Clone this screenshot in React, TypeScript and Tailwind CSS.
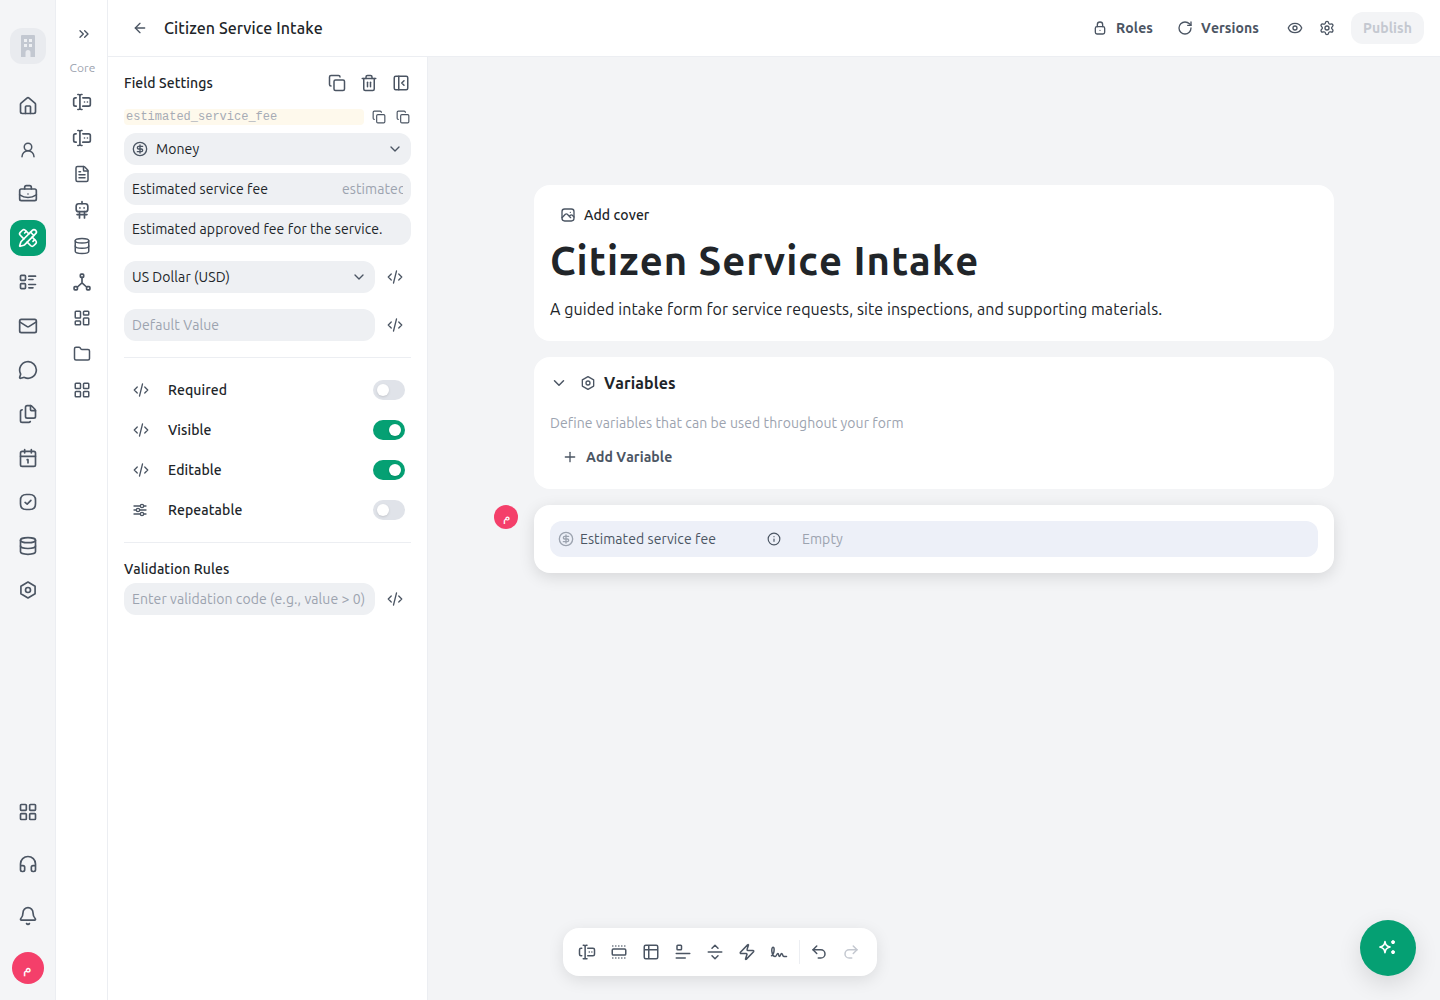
import React from "react";
import {
  House, UserRound, BriefcaseBusiness, PencilRuler, Mail, MessageCircle, Files, Calendar1, Database,
  LayoutGrid, Headphones, Bell, ChevronsRight, FileText, LayoutDashboard,
  Folder, ArrowLeft, RotateCw, Eye, Settings, Copy, Trash2, PanelLeftClose, ChevronDown, CircleDollarSign,
  Plus, Info, Table2, Zap, Undo2, Redo2
} from "lucide-react";

const ic = "#4b5563";

function S({ size = 20, children, color = ic, w = 2 }: { size?: number; children: React.ReactNode; color?: string; w?: number }) {
  return (
    <svg width={size} height={size} viewBox="0 0 24 24" fill="none" stroke={color} strokeWidth={w} strokeLinecap="round" strokeLinejoin="round">
      {children}
    </svg>
  );
}
function HexIcon({ size = 18 }: { size?: number }) {
  return <S size={size}><path d="M12 2.500l8.500 4.900v9.200L12 21.500l-8.500-4.900V7.400z" /><circle cx="12" cy="12" r="3" /></S>;
}
function CheckSq() {
  return <S><path d="M10 3h4c5 0 7 2 7 7v4c0 5-2 7-7 7h-4c-5 0-7-2-7-7v-4c0-5 2-7 7-7z" /><path d="M8.500 12.500l2.500 2 4.500-4.500" /></S>;
}
function ListIcon() {
  return <S><rect x="3" y="4" width="6" height="6" rx="1" /><rect x="3" y="14" width="6" height="6" rx="1" /><path d="M13 5h8M13 9h5M13 15h8M13 19h5" /></S>;
}
function LockDot() {
  return <S size={16}><rect x="5" y="10" width="14" height="11" rx="2.500" /><path d="M8 10V7a4 4 0 0 1 8 0v3M12 15.500h.01" /></S>;
}
function Field2({ size = 20 }: { size?: number }) {
  return (
    <S size={size}>
      <path d="M9.500 3.500v17M7 3h1a1.500 1.500 0 0 1 1.500 1.500A1.500 1.500 0 0 1 11 3h1M7 21h1a1.500 1.500 0 0 0 1.500-1.500A1.500 1.500 0 0 0 11 21h1" />
      <path d="M13 7h7a2 2 0 0 1 2 2v6a2 2 0 0 1-2 2h-7" />
      <path d="M5 7H4a2 2 0 0 0-2 2v6a2 2 0 0 0 2 2h1" />
      <path d="M15 12h.01M18.500 12h.01" />
    </S>
  );
}
function Signature() {
  return <S size={18}><path d="M2 17c2 0 3.500-5 3.500-8.500C5.500 6.500 5 5.500 4 5.500S2 8 2.500 11.500 5 18 7 18c1.500 0 2-4 3.500-4s.5 4 2 4 1.500-4 3-4 1 4 3 4h3.500" /></S>;
}
function Code({ size = 18 }: { size?: number }) {
  return <S size={size} w={1.75}><path d="M7 8l-4 4 4 4M17 8l4 4-4 4M14 4l-4 16" /></S>;
}
function Sliders() {
  return <S size={16}><path d="M3 6h9M18 6h3M3 12h3M12 12h9M3 18h9M18 18h3" /><circle cx="15" cy="6" r="2.500" /><circle cx="9" cy="12" r="2.500" /><circle cx="15" cy="18" r="2.500" /></S>;
}
function Robot() {
  return (
    <S size={20}>
      <rect x="5" y="4.500" width="14" height="9.500" rx="3" />
      <path d="M12 2v2.500M9.500 9.500h.01M14.500 9.500h.01M9 14v7.500M15 14v7.500M6 17.500h12" />
    </S>
  );
}
function Hub() {
  return (
    <S size={20}>
      <rect x="10" y="2.500" width="4" height="4" rx="1" />
      <rect x="2.500" y="17.500" width="4" height="4" rx="1" />
      <rect x="17.500" y="17.500" width="4" height="4" rx="1" />
      <path d="M12 6.500V13M12 13l-5.500 5M12 13l5.500 5" />
    </S>
  );
}
function Cover() {
  return (
    <S size={16}>
      <rect x="3" y="3" width="18" height="18" rx="4" />
      <path d="M3 16l5-5c1-1 2-1 3 0l5 5M14 14l1.500-1.500c1-1 2-1 3 0L21 15M15.500 8h.01" />
    </S>
  );
}
function Logo() {
  return (
    <svg width="20" height="24" viewBox="0 0 20 24">
      <path fill="#c3c8d1" d="M3 2a1 1 0 0 1 1-1h12a1 1 0 0 1 1 1v21h-4.500v-4.500a2.500 2.500 0 0 0-5 0V23H3z" />
      <g fill="#eef0f3">
        <rect x="6" y="5" width="3" height="3" />
        <rect x="11" y="5" width="3" height="3" />
        <rect x="6" y="10" width="3" height="3" />
        <rect x="11" y="10" width="3" height="3" />
      </g>
    </svg>
  );
}
function Spark() {
  return (
    <svg width="22" height="22" viewBox="0 0 24 24" fill="none" stroke="#fff" strokeWidth="1.800" strokeLinejoin="round">
      <path d="M8.700 5c.6 3.600 1.500 4.800 5.500 6-4 1.200-4.900 2.400-5.500 6-.6-3.600-1.500-4.800-5.500-6 4-1.200 4.900-2.400 5.500-6z" />
      <path d="M17.500 3.500v4M15.500 5.500h4M17.500 14.500v4M15.500 16.500h4" strokeWidth="2.400" />
    </svg>
  );
}
function Avatar({ size, text }: { size: string; text: string }) {
  return (
    <div className={`${size} rounded-full bg-[#f43f6a] flex items-center justify-center text-white leading-none ${text}`}>م</div>
  );
}
function Toggle({ on }: { on?: boolean }) {
  return (
    <div className={`w-8 h-5 rounded-full flex items-center px-[4px] ${on ? "bg-[#05a073] justify-end" : "bg-[#e0e3e9] justify-start"}`}>
      <div className="w-3 h-3 rounded-full bg-white shadow-sm" />
    </div>
  );
}
function Sep() {
  return <div className="h-px bg-[#eceef2]" />;
}

const top = [
  <House size={20} />, <UserRound size={18} />, <BriefcaseBusiness size={20} />, <PencilRuler size={20} color="#fff" />,
  <ListIcon />, <Mail size={20} />, <MessageCircle size={20} />, <Files size={20} />, <Calendar1 size={20} />,
  <CheckSq />, <Database size={20} />, <HexIcon size={20} />,
];
const core = [
  <Field2 />, <Field2 />, <FileText size={18} />, <Robot />, <Database size={18} />, <Hub />,
  <LayoutDashboard size={18} />, <Folder size={18} />, <LayoutGrid size={18} />,
];

function Toggles() {
  const rows: [React.ReactNode, string, boolean][] = [
    [<Code />, "Required", false],
    [<Code />, "Visible", true],
    [<Code />, "Editable", true],
    [<Sliders />, "Repeatable", false],
  ];
  return (
    <div className="py-3 flex flex-col">
      {rows.map(([i, l, on]) => (
        <div key={l} className="h-10 flex items-center pl-2 pr-[6px]">
          <span className="w-9 flex">{i}</span>
          <span className="flex-1 text-sm font-medium text-[#212529]">{l}</span>
          <Toggle on={on} />
        </div>
      ))}
    </div>
  );
}

export default function App() {
  return (
    <div className="w-[1440px] h-[1000px] flex overflow-hidden bg-[#f3f4f6] text-[#212529] relative font-['Ubuntu','Noto_Sans',sans-serif] [font-kerning:none] tracking-[0.085px]">
      <aside className="w-14 shrink-0 flex flex-col items-center border-r border-[#eceef2] bg-[#f4f5f7] text-[#4b5563] pt-7 pb-4">
        <div className="w-9 h-9 rounded-xl bg-[#e9ebef] flex items-center justify-center mb-6">
          <Logo />
        </div>
        {top.map((t, i) => (
          <div key={i} className={`w-9 h-9 mb-2 flex items-center justify-center rounded-xl ${i === 3 ? "bg-[#05a073]" : ""}`}>{t}</div>
        ))}
        <div className="flex-1" />
        <div className="flex flex-col items-center gap-5">
          <div className="h-8 flex items-center"><LayoutGrid size={20} /></div>
          <div className="h-8 flex items-center"><Headphones size={20} /></div>
          <div className="h-8 flex items-center"><Bell size={20} /></div>
          <Avatar size="w-8 h-8" text="text-sm" />
        </div>
      </aside>
      <nav className="w-[52px] shrink-0 bg-white border-r border-[#eceef2] flex flex-col items-center text-[#4b5563]">
        <div className="h-9 mt-4 flex items-center ml-1"><ChevronsRight size={16} /></div>
        <div className="text-xs text-[#9ca3af] mt-2 mb-2 ml-[2px]">Core</div>
        {core.map((c, i) => (
          <div key={i} className="w-9 h-9 flex items-center justify-center">{c}</div>
        ))}
      </nav>
      <div className="flex-1 flex flex-col min-w-0">
        <header className="h-[57px] shrink-0 bg-white border-b border-[#eceef2] flex items-center pl-6 pr-4">
          <ArrowLeft size={16} className="text-[#4b5563]" />
          <h1 className="text-base font-medium text-[#212529] ml-4">Citizen Service Intake</h1>
          <div className="flex-1" />
          <LockDot />
          <span className="text-sm font-semibold text-[#4b5563] ml-2">Roles</span>
          <RotateCw size={16} className="text-[#4b5563] ml-6" />
          <span className="text-sm font-semibold text-[#4b5563] ml-2">Versions</span>
          <Eye size={16} className="text-[#4b5563] ml-7" />
          <Settings size={16} className="text-[#4b5563] ml-4" />
          <div className="ml-4 h-8 px-3 rounded-xl bg-[#f3f4f6] text-sm font-semibold text-[#c4c8d0] flex items-center">Publish</div>
        </header>
        <div className="flex-1 flex min-h-0">
          <section className="w-[320px] shrink-0 bg-white border-r border-[#eceef2] px-4 pt-4">
            <div className="flex items-center h-5">
              <span className="flex-1 text-sm font-medium text-[#212529]">Field Settings</span>
              <Copy size={18} className="text-[#4b5563]" />
              <Trash2 size={18} className="text-[#4b5563] ml-[14px]" />
              <PanelLeftClose size={18} className="text-[#4b5563] ml-[14px] mr-px" />
            </div>
            <div className="flex items-center mt-4 h-4 mb-2">
              <div className="w-[240px] h-4 bg-[#fef9ec] rounded text-xs text-[#a6abb5] px-[2px] leading-4 tracking-normal font-['Liberation_Mono',monospace]">estimated_service_fee</div>
              <Copy size={14} className="text-[#4b5563] ml-[8px]" />
              <Copy size={14} className="text-[#4b5563] ml-[10px]" />
            </div>
            <div className="h-8 rounded-xl bg-[#eef0f3] flex items-center px-2 text-sm">
              <CircleDollarSign size={16} className="text-[#4b5563]" />
              <span className="ml-2 flex-1">Money</span>
              <ChevronDown size={16} className="text-[#4b5563]" />
            </div>
            <div className="h-8 rounded-xl bg-[#eef0f3] flex items-center px-2 text-sm mt-2">
              <span className="flex-1">Estimated service fee</span>
              <span className="w-[61px] overflow-hidden text-[#9ca3af] whitespace-nowrap">estimated_service_fee</span>
            </div>
            <div className="h-8 rounded-xl bg-[#eef0f3] flex items-center px-2 text-sm mt-2">Estimated approved fee for the service.</div>
            <div className="flex items-center mt-4">
              <div className="w-[251px] h-8 rounded-xl bg-[#eef0f3] flex items-center px-2 text-sm">
                <span className="flex-1">US Dollar (USD)</span>
                <ChevronDown size={16} className="text-[#4b5563]" />
              </div>
              <span className="ml-[11px] flex"><Code /></span>
            </div>
            <div className="flex items-center mt-4">
              <div className="w-[251px] h-8 rounded-xl bg-[#eef0f3] flex items-center px-2 text-sm text-[#9ca3af]">Default Value</div>
              <span className="ml-[11px] flex"><Code /></span>
            </div>
            <div className="mt-4"><Sep /></div>
            <Toggles />
            <Sep />
            <div className="text-sm font-medium text-[#212529] mt-4 mb-1 h-5 leading-5">Validation Rules</div>
            <div className="flex items-center">
              <div className="w-[251px] h-8 rounded-xl bg-[#eef0f3] flex items-center px-2 text-sm text-[#9ca3af] whitespace-nowrap">Enter validation code (e.g., value &gt; 0)</div>
              <span className="ml-[11px] flex"><Code /></span>
            </div>
          </section>
          <main className="flex-1 flex flex-col items-center pt-[128px] gap-4">
            <div className="w-[800px] h-[156px] bg-white rounded-2xl px-4 pt-5">
              <div className="flex items-center pl-[10px] h-5 text-sm font-medium">
                <Cover />
                <span className="ml-2">Add cover</span>
              </div>
              <div className="text-[40px] font-bold leading-[48px] mt-[12px] tracking-wide">Citizen Service Intake</div>
              <div className="text-base mt-[12px] leading-6">A guided intake form for service requests, site inspections, and supporting materials.</div>
            </div>
            <div className="w-[800px] h-[132px] bg-white rounded-2xl px-4 pt-4">
              <div className="flex items-center h-5">
                <ChevronDown size={18} className="text-[#4b5563]" />
                <span className="ml-[12px] flex"><HexIcon size={16} /></span>
                <span className="ml-2 text-base font-semibold">Variables</span>
              </div>
              <div className="text-sm text-[#9ca3af] mt-[20px]">Define variables that can be used throughout your form</div>
              <div className="flex items-center mt-[14px] ml-3 text-sm font-semibold text-[#4b5563]">
                <Plus size={16} />
                <span className="ml-2">Add Variable</span>
              </div>
            </div>
            <div className="w-[800px] h-[68px] bg-white rounded-2xl p-4 shadow-[0_4px_16px_rgba(0,0,0,0.12)] relative">
              <div className="absolute -left-10 top-0"><Avatar size="w-6 h-6" text="text-xs" /></div>
              <div className="h-9 rounded-xl bg-[#edf0f8] flex items-center px-2 text-sm">
                <CircleDollarSign size={16} className="text-[#9ca3af]" />
                <span className="ml-[6px] w-[187px] text-[#4b5563]">Estimated service fee</span>
                <Info size={14} className="text-[#4b5563]" />
                <span className="ml-[21px] text-[#9ca3af]">Empty</span>
              </div>
            </div>
          </main>
        </div>
      </div>
      <div className="absolute left-[563px] top-[928px] w-[314px] h-12 rounded-2xl bg-white shadow-[0_4px_16px_rgba(0,0,0,0.1)] flex items-center px-[15px] text-[#4b5563]">
        <div className="flex items-center gap-[14px]">
          <Field2 size={18} />
          <S size={18}><rect x="3" y="8" width="18" height="8" rx="1.500" /><path d="M3 4h18M3 20h18" strokeDasharray="1.500 2.500" strokeLinecap="butt" /></S>
          <Table2 size={18} />
          <S size={18}><rect x="4" y="3" width="6" height="6" rx="1" /><path d="M3 14h18M3 20h12" /></S>
          <S size={18}><path d="M3 12h18M8 7l4-4 4 4M8 17l4 4 4-4" /></S>
          <Zap size={18} />
          <Signature />
        </div>
        <div className="w-px h-6 bg-[#eceef2] ml-[11px] mr-[10px]" />
        <Undo2 size={18} />
        <Redo2 size={18} className="ml-[14px] text-[#c4c8d0]" />
      </div>
      <div className="absolute left-[1360px] top-[920px] w-14 h-14 rounded-full bg-[#05a073] flex items-center justify-center shadow-[0_8px_24px_rgba(0,0,0,0.12)]">
        <Spark />
      </div>
    </div>
  );
}
